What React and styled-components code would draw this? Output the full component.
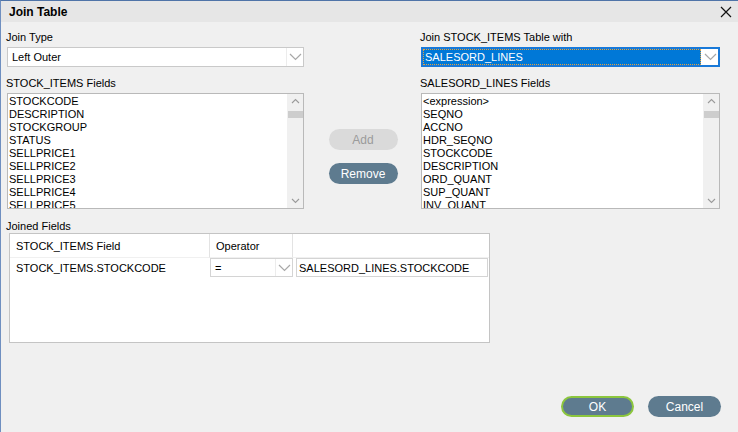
import React from 'react';
import styled, { createGlobalStyle } from 'styled-components';

const GlobalStyle = createGlobalStyle`
  html, body {
    margin: 0;
    padding: 0;
    background: #f0f0f0;
  }
  body {
    font-family: Tahoma, "Liberation Sans", Arial, sans-serif;
    font-size: 11px;
    color: #000;
  }
`;

const Window = styled.div`
  width: 738px;
  height: 432px;
  box-sizing: border-box;
  border-top: 1px solid #4f74a8;
  border-left: 1px solid #6f8fc0;
  background: #f0f0f0;
  display: flex;
  flex-direction: column;
  overflow: hidden;
`;

const TitleBar = styled.div`
  height: 21px;
  flex: none;
  background: #e6e6e6;
  display: flex;
  align-items: center;
  justify-content: space-between;
  padding: 0 6px 0 8px;
`;

const Title = styled.span`
  font-weight: bold;
  font-size: 12px;
`;

const CloseButton = styled.button`
  border: 0;
  background: none;
  padding: 0;
  width: 12px;
  height: 12px;
  display: flex;
  cursor: pointer;
`;

const Content = styled.div`
  flex: 1;
  display: flex;
  flex-direction: column;
  padding: 0 17px 15px 6px;
`;

const TopGrid = styled.div`
  display: grid;
  grid-template-columns: 297px 117px 299px;
  margin-top: 9px;
`;

const Column = styled.div`
  display: flex;
  flex-direction: column;
  grid-column: ${p => p.$col};
`;

const Label = styled.div`
  height: 13px;
  line-height: 13px;
  margin-top: ${p => p.$top || 0}px;
  margin-bottom: 3px;
  margin-left: -1px;
  white-space: nowrap;
`;

const SelectBox = styled.div`
  height: 20px;
  box-sizing: border-box;
  display: flex;
  align-items: stretch;
  background: #fff;
  border: ${p => (p.$focused ? '2px solid #1979d8' : '1px solid #c9c9c9')};
`;

const SelectValue = styled.div`
  flex: 1;
  display: flex;
  align-items: center;
  padding-left: 4px;
  white-space: nowrap;
  ${p =>
    p.$focused &&
    `
    background: #0078d7;
    color: #fff;
    margin: 0 1px 0 0;
    outline: 1px dotted #e9a23b;
    outline-offset: -1px;
    padding-left: 2px;
  `}
`;

const Arrow = styled.div`
  width: 16px;
  flex: none;
  display: flex;
  align-items: center;
  justify-content: center;
  border-left: ${p => (p.$plain ? 'none' : '1px solid #ececec')};
  background: #fff;
`;

const ListBox = styled.div`
  height: 116px;
  box-sizing: border-box;
  border: 1px solid #b9b9b9;
  background: #fff;
  display: flex;
`;

const ListItems = styled.div`
  flex: 1;
  overflow: hidden;
  padding: 1px 0 0 1px;
`;

const ListItem = styled.div`
  height: 13px;
  line-height: 13px;
  white-space: nowrap;
`;

const ScrollBar = styled.div`
  width: 16px;
  flex: none;
  background: #f0f0f0;
  display: flex;
  flex-direction: column;
  align-items: center;
`;

const ScrollArrow = styled.div`
  height: 14px;
  display: flex;
  align-items: center;
  justify-content: center;
`;

const Thumb = styled.div`
  width: 15px;
  height: 7px;
  background: #cdcdcd;
  margin-top: 3px;
  flex: none;
`;

const ScrollTrack = styled.div`
  flex: 1;
`;

const ButtonStack = styled.div`
  display: flex;
  flex-direction: column;
  align-items: center;
  padding-top: 98px;
  padding-left: 1px;
  gap: 13px;
`;

const PillButton = styled.button`
  width: ${p => p.$w || 69}px;
  height: ${p => p.$h || 21}px;
  border-radius: 11px;
  font-family: inherit;
  font-size: 12px;
  padding: 0;
  cursor: pointer;
  box-sizing: border-box;
  border: ${p => (p.$default ? '2px solid #8cc63e' : 'none')};
  background: ${p => (p.$disabled ? '#dadada' : '#5e7b8f')};
  color: ${p => (p.$disabled ? '#9b9b9b' : '#fff')};
`;

const JoinedLabel = styled(Label)`
  margin-top: 11px;
  margin-bottom: 0;
`;

const JoinTable = styled.div`
  margin-left: 2px;
  width: 481px;
  height: 110px;
  box-sizing: border-box;
  border: 1px solid #c4c4c4;
  background: #fff;
  display: grid;
  grid-template-columns: 200px 83px 1fr;
  grid-template-rows: 24px 19px 1fr;
`;

const HeaderCell = styled.div`
  display: flex;
  align-items: center;
  padding-left: 6px;
  border-right: ${p => (p.$last ? 'none' : '1px solid #e3e3e3')};
  border-bottom: 1px solid #f0f0f0;
`;

const Cell = styled.div`
  display: flex;
  align-items: center;
  padding-left: 6px;
  white-space: nowrap;
`;

const CellSelect = styled.div`
  display: flex;
  border: 1px solid #d4d4d4;
  box-sizing: border-box;
  background: #fff;
`;

const CellValue = styled.div`
  flex: 1;
  display: flex;
  align-items: center;
  padding-left: 4px;
`;

const CellInput = styled.div`
  margin-left: 3px;
  margin-right: 1px;
  border: 1px solid #d4d4d4;
  display: flex;
  align-items: center;
  padding-left: 2px;
  white-space: nowrap;
`;

const Footer = styled.div`
  margin-top: auto;
  display: flex;
  justify-content: flex-end;
  gap: 14px;
`;

const Chevron = ({ up }) => (
  <svg width="13" height="8" viewBox="0 0 13 8">
    <path
      d={up ? 'M1 7 L6.5 1.5 L12 7' : 'M1 1 L6.5 6.5 L12 1'}
      fill="none"
      stroke="#a8a8a8"
      strokeWidth="1.2"
    />
  </svg>
);

const SmallChevron = ({ up }) => (
  <svg width="9" height="6" viewBox="0 0 9 6">
    <path
      d={up ? 'M1 5 L4.5 1.5 L8 5' : 'M1 1 L4.5 4.5 L8 1'}
      fill="none"
      stroke="#9a9a9a"
      strokeWidth="1.1"
    />
  </svg>
);

const Select = ({ value, focused }) => (
  <SelectBox $focused={focused}>
    <SelectValue $focused={focused}>{value}</SelectValue>
    <Arrow $plain={focused}>
      <Chevron />
    </Arrow>
  </SelectBox>
);

const List = ({ items }) => (
  <ListBox>
    <ListItems>
      {items.map(i => (
        <ListItem key={i}>{i}</ListItem>
      ))}
    </ListItems>
    <ScrollBar>
      <ScrollArrow>
        <SmallChevron up />
      </ScrollArrow>
      <Thumb />
      <ScrollTrack />
      <ScrollArrow>
        <SmallChevron />
      </ScrollArrow>
    </ScrollBar>
  </ListBox>
);

const stockFields = [
  'STOCKCODE',
  'DESCRIPTION',
  'STOCKGROUP',
  'STATUS',
  'SELLPRICE1',
  'SELLPRICE2',
  'SELLPRICE3',
  'SELLPRICE4',
  'SELLPRICE5',
];

const salesFields = [
  '<expression>',
  'SEQNO',
  'ACCNO',
  'HDR_SEQNO',
  'STOCKCODE',
  'DESCRIPTION',
  'ORD_QUANT',
  'SUP_QUANT',
  'INV_QUANT',
];

export default function App() {
  return (
    <>
      <GlobalStyle />
      <Window>
        <TitleBar>
          <Title>Join Table</Title>
          <CloseButton aria-label="Close">
            <svg width="12" height="12" viewBox="0 0 12 12">
              <path d="M1 1 L11 11 M11 1 L1 11" stroke="#111" strokeWidth="1.2" />
            </svg>
          </CloseButton>
        </TitleBar>
        <Content>
          <TopGrid>
            <Column $col={1}>
              <Label>Join Type</Label>
              <Select value="Left Outer" />
              <Label $top={10}>STOCK_ITEMS Fields</Label>
              <List items={stockFields} />
            </Column>
            <ButtonStack>
              <PillButton $disabled>Add</PillButton>
              <PillButton>Remove</PillButton>
            </ButtonStack>
            <Column $col={3}>
              <Label>Join STOCK_ITEMS Table with</Label>
              <Select value="SALESORD_LINES" focused />
              <Label $top={10}>SALESORD_LINES Fields</Label>
              <List items={salesFields} />
            </Column>
          </TopGrid>
          <JoinedLabel>Joined Fields</JoinedLabel>
          <JoinTable>
            <HeaderCell>STOCK_ITEMS Field</HeaderCell>
            <HeaderCell>Operator</HeaderCell>
            <HeaderCell $last />
            <Cell>STOCK_ITEMS.STOCKCODE</Cell>
            <CellSelect>
              <CellValue>=</CellValue>
              <Arrow>
                <Chevron />
              </Arrow>
            </CellSelect>
            <CellInput>SALESORD_LINES.STOCKCODE</CellInput>
          </JoinTable>
          <Footer>
            <PillButton $default $w={73}>OK</PillButton>
            <PillButton $w={73}>Cancel</PillButton>
          </Footer>
        </Content>
      </Window>
    </>
  );
}
